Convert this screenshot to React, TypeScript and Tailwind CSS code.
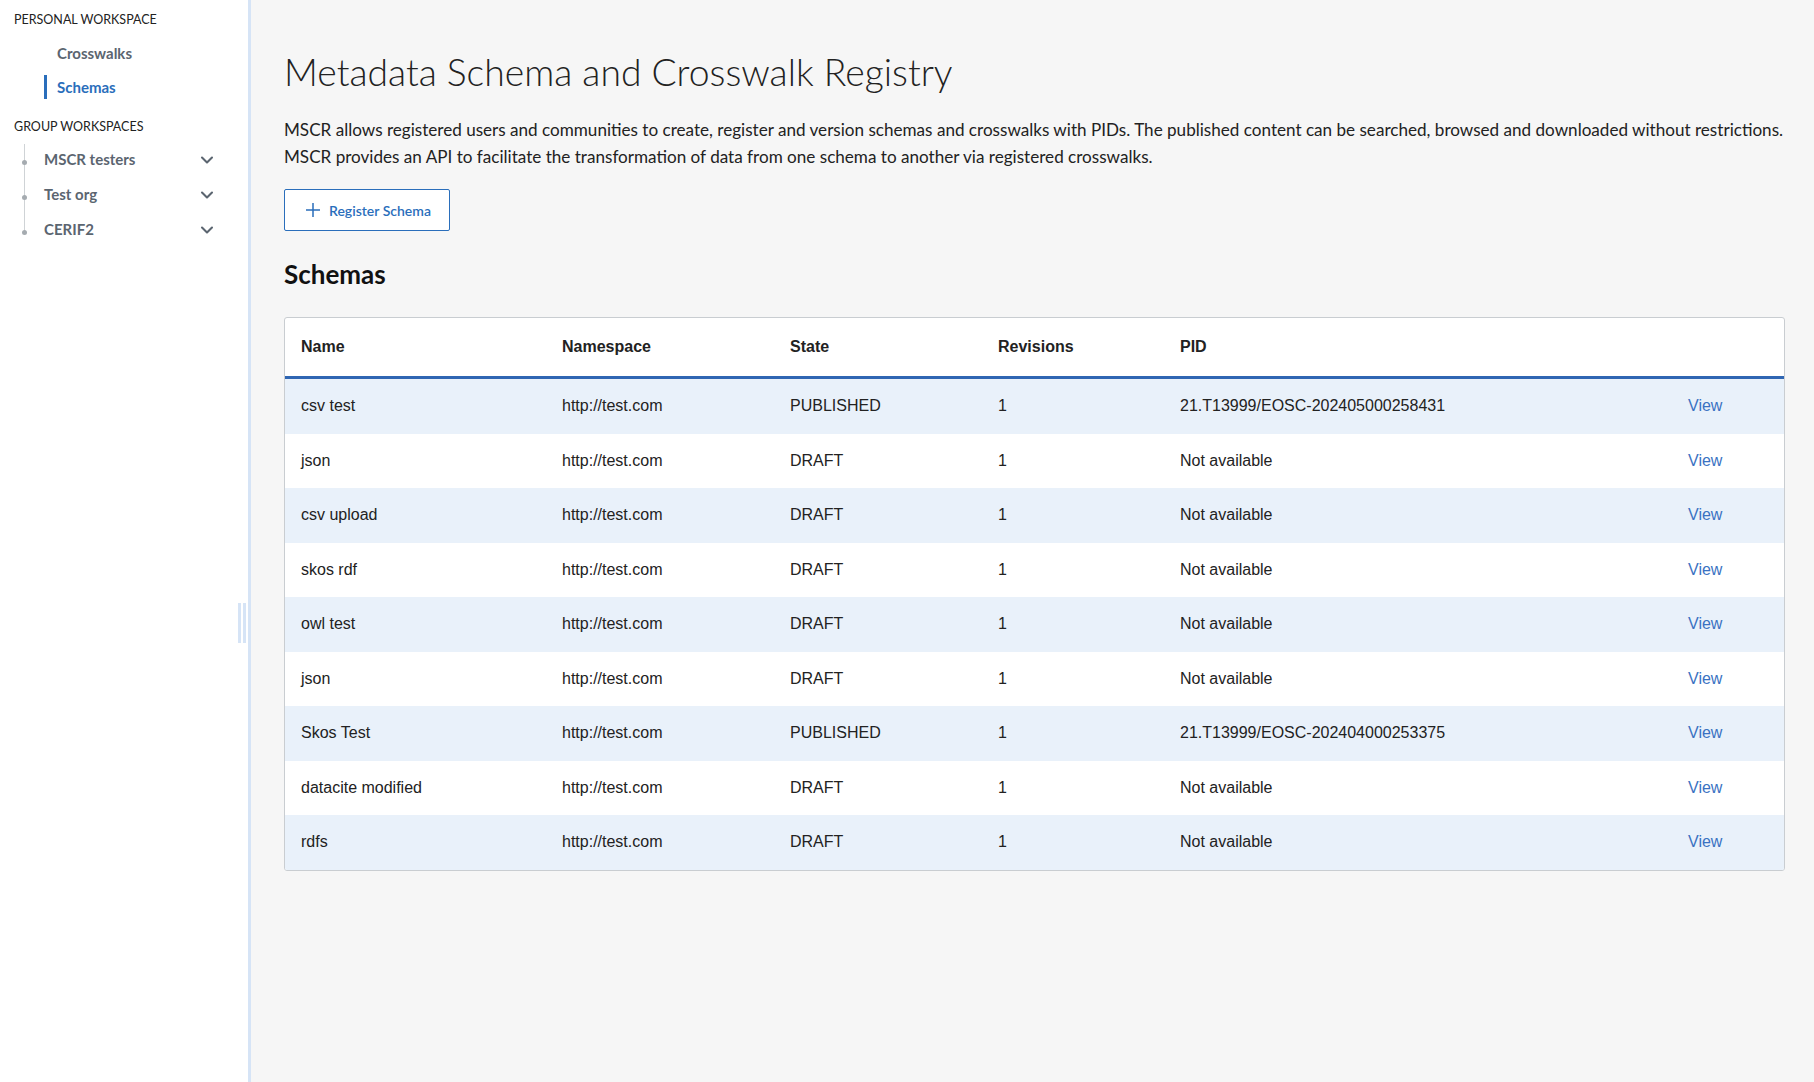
import React from 'react';
import { ChevronDown } from 'lucide-react';

type Schema = {
  name: string;
  namespace: string;
  state: string;
  revisions: number;
  pid: string;
};

const schemas: Schema[] = [
  { name: 'csv test', namespace: 'http://test.com', state: 'PUBLISHED', revisions: 1, pid: '21.T13999/EOSC-202405000258431' },
  { name: 'json', namespace: 'http://test.com', state: 'DRAFT', revisions: 1, pid: 'Not available' },
  { name: 'csv upload', namespace: 'http://test.com', state: 'DRAFT', revisions: 1, pid: 'Not available' },
  { name: 'skos rdf', namespace: 'http://test.com', state: 'DRAFT', revisions: 1, pid: 'Not available' },
  { name: 'owl test', namespace: 'http://test.com', state: 'DRAFT', revisions: 1, pid: 'Not available' },
  { name: 'json', namespace: 'http://test.com', state: 'DRAFT', revisions: 1, pid: 'Not available' },
  { name: 'Skos Test', namespace: 'http://test.com', state: 'PUBLISHED', revisions: 1, pid: '21.T13999/EOSC-202404000253375' },
  { name: 'datacite modified', namespace: 'http://test.com', state: 'DRAFT', revisions: 1, pid: 'Not available' },
  { name: 'rdfs', namespace: 'http://test.com', state: 'DRAFT', revisions: 1, pid: 'Not available' },
];

const groups = ['MSCR testers', 'Test org', 'CERIF2'];

const cols = 'grid grid-cols-[261px_228px_208px_182px_508px_1fr] items-center';

const Sidebar: React.FC = () => {
  return (
    <aside className="relative w-[251px] shrink-0 bg-white border-r-[3px] border-[#d6e4f6] font-['Lato',sans-serif]">
      <div className="pl-[14px] pt-[10px] h-[20px] box-content text-[12.5px] leading-[20px] text-[#222] uppercase">
        Personal workspace
      </div>

      <nav className="mt-[6px]">
        <div className="h-[34px] flex items-center pl-[57px] text-[15px] font-bold text-[#5b6570]">
          Crosswalks
        </div>
        <div className="h-[34px] flex items-center">
          <span className="ml-[44px] w-[3px] h-[24px] bg-[#2a6ebb]" />
          <span className="ml-[10px] text-[15px] font-bold text-[#2a6ebb]">Schemas</span>
        </div>
      </nav>

      <div className="mt-[13px] pl-[14px] h-[20px] text-[12.5px] leading-[20px] text-[#222] uppercase">
        Group workspaces
      </div>

      <div className="relative mt-[5px]">
        <span className="absolute left-[24px] top-[2px] h-[90px] w-px bg-[#cfd3d6]" />
        {groups.map((g) => (
          <div key={g} className="relative h-[35px] flex items-center">
            <span className="absolute left-[22px] top-[18px] w-[5px] h-[5px] rounded-full bg-[#a5abb0]" />
            <span className="ml-[44px] text-[15px] font-bold text-[#5b6570]">{g}</span>
            <ChevronDown className="ml-auto mr-[31px] text-[#5b6570]" size={20} strokeWidth={2.5} />
          </div>
        ))}
      </div>

      {/* resize handle */}
      <div className="absolute right-[2px] top-[603px] flex gap-[2px]">
        <span className="w-[3px] h-[40px] bg-[#d6e4f6]" />
        <span className="w-[3px] h-[40px] bg-[#d6e4f6]" />
      </div>
    </aside>
  );
};

const App: React.FC = () => {
  return (
    <div className="flex h-[1082px] w-full overflow-hidden bg-[#f6f6f6]">
      <Sidebar />

      <main className="flex-1 pl-[33px] pr-[29px] pt-[48px] font-['Lato',sans-serif] text-[#222]">
        <h1 className="text-[37.3px] leading-[48px] font-light text-[#222]">
          Metadata Schema and Crosswalk Registry
        </h1>

        <p className="mt-[20px] text-[17.1px] leading-[27px] text-[#222]">
          MSCR allows registered users and communities to create, register and version schemas and crosswalks with PIDs. The published content can be searched, browsed and downloaded without restrictions.
          <br />
          MSCR provides an API to facilitate the transformation of data from one schema to another via registered crosswalks.
        </p>

        <button className="mt-[19px] h-[42px] w-[166px] flex items-center bg-white border border-[#2a6ebb] rounded-[2px] text-[#2a6ebb]">
          <svg className="ml-[20px]" width="16" height="16" viewBox="0 0 16 16" fill="none" stroke="currentColor" strokeWidth="1.5">
            <path d="M8 1v14M1 8h14" />
          </svg>
          <span className="ml-[8px] text-[14px] font-semibold">Register Schema</span>
        </button>

        <h2 className="mt-[27px] text-[26px] leading-[32px] font-bold text-[#111]">Schemas</h2>

        <div className="mt-[27px] bg-white border border-[#c9cdd1] rounded-[3px] overflow-hidden font-['Liberation_Sans',Arial,sans-serif] text-[16px] text-[#222]">
          <div className={`${cols} h-[61px] border-b-[3px] border-[#2f66b3] font-bold`}>
            <div className="pl-4">Name</div>
            <div className="pl-4">Namespace</div>
            <div className="pl-4">State</div>
            <div className="pl-4">Revisions</div>
            <div className="pl-4">PID</div>
            <div />
          </div>
          {schemas.map((s, i) => (
            <div
              key={i}
              className={`${cols} h-[54.5px] ${i % 2 === 0 ? 'bg-[#e9f1fa]' : 'bg-white'}`}
            >
              <div className="pl-4">{s.name}</div>
              <div className="pl-4">{s.namespace}</div>
              <div className="pl-4">{s.state}</div>
              <div className="pl-4">{s.revisions}</div>
              <div className="pl-4">{s.pid}</div>
              <div className="pl-4">
                <a href="#" className="text-[#3a72c2]">View</a>
              </div>
            </div>
          ))}
        </div>
      </main>
    </div>
  );
};

export default App;
